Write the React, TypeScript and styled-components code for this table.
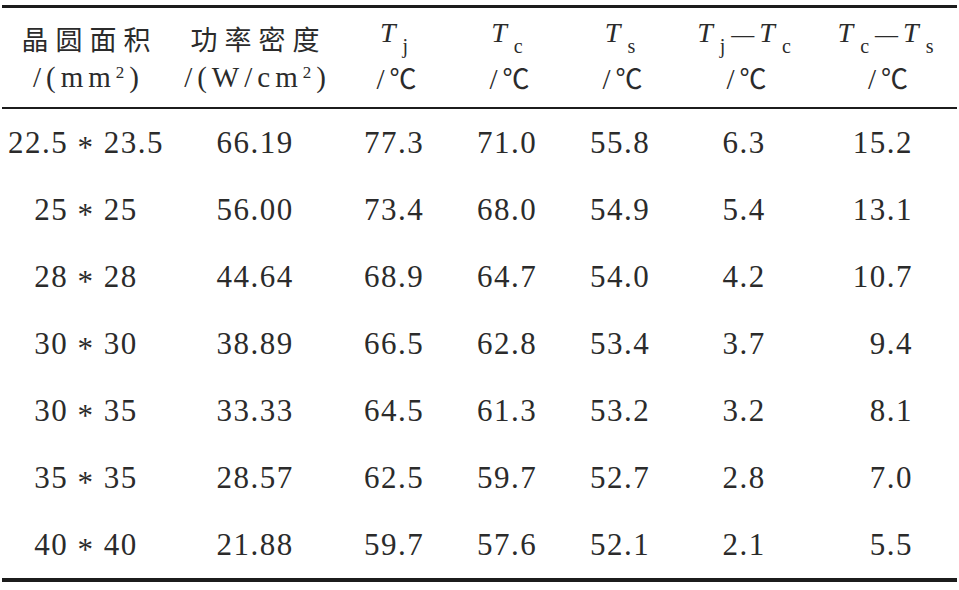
import React from "react";
import styled, { createGlobalStyle } from "styled-components";

const Global = createGlobalStyle`
  html, body { margin: 0; padding: 0; background: #ffffff; }
  body { width: 959px; height: 590px; overflow: hidden; }
`;

const COLS = "168px 170px 108px 118px 108px 140px 143px";
const SERIF = `"Liberation Serif", "Times New Roman", serif`;
const CJK = `"Noto Sans CJK SC", "Noto Sans CJK JP", sans-serif`;

const Page = styled.div`
  padding: 5px 2px 0 2px;
  font-family: ${SERIF};
  color: #2b2b2b;
`;

const Table = styled.div`
  width: 955px;
  border-top: 3px solid #1c1c1c;
  border-bottom: 4px solid #1c1c1c;
`;

const HeadRow = styled.div`
  display: grid;
  grid-template-columns: ${COLS};
  padding: 11px 0 11px;
  border-bottom: 2px solid #1c1c1c;
`;

const HeadCell = styled.div`
  display: flex;
  flex-direction: column;
  align-items: center;
`;

const HeadLine = styled.div<{ $h: number }>`
  height: ${(p) => p.$h}px;
  line-height: ${(p) => p.$h}px;
  white-space: nowrap;
  text-align: center;
  font-family: ${SERIF};
`;

const CjkTitle = styled.span`
  font-family: ${CJK};
  font-size: 27px;
  letter-spacing: 7px;
  padding-left: 7px;
`;

const Unit = styled.span`
  font-family: ${SERIF};
  font-size: 29px;
  letter-spacing: 5px;
  padding-left: 5px;
`;

const Wide = styled.span`
  font-family: ${CJK};
  font-size: 27px;
  letter-spacing: 0;
`;

const Sup = styled.span`
  font-family: ${SERIF};
  font-size: 17px;
  line-height: 1;
  vertical-align: 9px;
`;

const Var = styled.span`
  font-family: ${SERIF};
  font-size: 28px;
  font-style: italic;
  line-height: 1;
  vertical-align: 6px;
`;

const Sub = styled.span`
  font-family: ${SERIF};
  font-size: 20px;
  line-height: 1;
  margin-left: 7px;
  vertical-align: -5px;
`;

const Dash = styled.span`
  font-family: ${SERIF};
  font-size: 23px;
  line-height: 1;
  margin: 0 5px 0 6px;
  vertical-align: 6px;
`;

const Row = styled.div`
  display: grid;
  grid-template-columns: ${COLS};
  height: 67px;
`;

const Cell = styled.div<{ $right?: boolean }>`
  font-family: ${SERIF};
  line-height: 67px;
  font-size: 31px;
  letter-spacing: 1.5px;
  white-space: nowrap;
  text-align: ${(p) => (p.$right ? "right" : "center")};
  padding-right: ${(p) => (p.$right ? "44px" : "0")};
`;

const Star = styled.span`
  font-family: ${SERIF};
  vertical-align: -5px;
  line-height: 1;
`;

const rows: string[][] = [
  ["22.5*23.5", "66.19", "77.3", "71.0", "55.8", "6.3", "15.2"],
  ["25*25", "56.00", "73.4", "68.0", "54.9", "5.4", "13.1"],
  ["28*28", "44.64", "68.9", "64.7", "54.0", "4.2", "10.7"],
  ["30*30", "38.89", "66.5", "62.8", "53.4", "3.7", "9.4"],
  ["30*35", "33.33", "64.5", "61.3", "53.2", "3.2", "8.1"],
  ["35*35", "28.57", "62.5", "59.7", "52.7", "2.8", "7.0"],
  ["40*40", "21.88", "59.7", "57.6", "52.1", "2.1", "5.5"],
];

type Head = { title: React.ReactNode; unit: React.ReactNode };

const TempUnit = () => (
  <Unit>
    /<Wide>℃</Wide>
  </Unit>
);

const T = ({ s }: { s: string }) => (
  <>
    <Var>T</Var>
    <Sub>{s}</Sub>
  </>
);

const heads: Head[] = [
  {
    title: <CjkTitle>晶圆面积</CjkTitle>,
    unit: (
      <Unit>
        /(mm<Sup>2</Sup>)
      </Unit>
    ),
  },
  {
    title: <CjkTitle>功率密度</CjkTitle>,
    unit: (
      <Unit>
        /(W/cm<Sup>2</Sup>)
      </Unit>
    ),
  },
  { title: <T s="j" />, unit: <TempUnit /> },
  { title: <T s="c" />, unit: <TempUnit /> },
  { title: <T s="s" />, unit: <TempUnit /> },
  {
    title: (
      <>
        <T s="j" />
        <Dash>—</Dash>
        <T s="c" />
      </>
    ),
    unit: <TempUnit />,
  },
  {
    title: (
      <>
        <T s="c" />
        <Dash>—</Dash>
        <T s="s" />
      </>
    ),
    unit: <TempUnit />,
  },
];

const Area = ({ v }: { v: string }) => {
  const [a, b] = v.split("*");
  return (
    <>
      {a} <Star>*</Star> {b}
    </>
  );
};

export default function App() {
  return (
    <Page>
      <Global />
      <Table>
        <HeadRow>
          {heads.map((h, i) => (
            <HeadCell key={i}>
              <HeadLine $h={40}>{h.title}</HeadLine>
              <HeadLine $h={37}>{h.unit}</HeadLine>
            </HeadCell>
          ))}
        </HeadRow>
        {rows.map((r, i) => (
          <Row key={i}>
            <Cell>
              <Area v={r[0]} />
            </Cell>
            {r.slice(1).map((v, j) => (
              <Cell key={j} $right={j === 5}>
                {v}
              </Cell>
            ))}
          </Row>
        ))}
      </Table>
    </Page>
  );
}
